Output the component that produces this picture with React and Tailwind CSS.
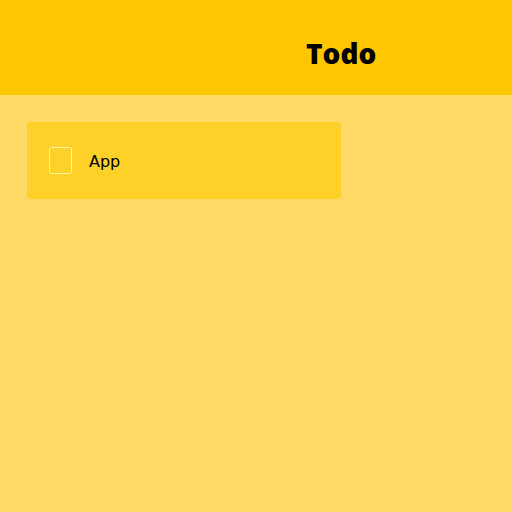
import React from "react";

function App() {
  return (
    <div className="w-full min-h-[512px] bg-[#ffd966] font-['DejaVu_Sans',sans-serif]">
      <header className="h-[95px] bg-[#ffc700] flex items-center pl-[306px] pt-[11px]">
        <h1 className="text-[28px] font-extrabold text-black font-['Open_Sans',sans-serif]">
          Todo
        </h1>
      </header>
      <div className="px-[27px] pt-[27px]">
        <div className="w-[314px] h-[77px] bg-[#ffd027] rounded flex items-center pl-[22px] gap-[17px]">
          <div className="w-[23px] h-[27px] border border-[#fff3a0] rounded-[2px]" />
          <span className="text-base leading-6 pt-[3px] text-black font-['DejaVu_Sans',sans-serif]">App</span>
        </div>
      </div>
    </div>
  );
}

export default App;
